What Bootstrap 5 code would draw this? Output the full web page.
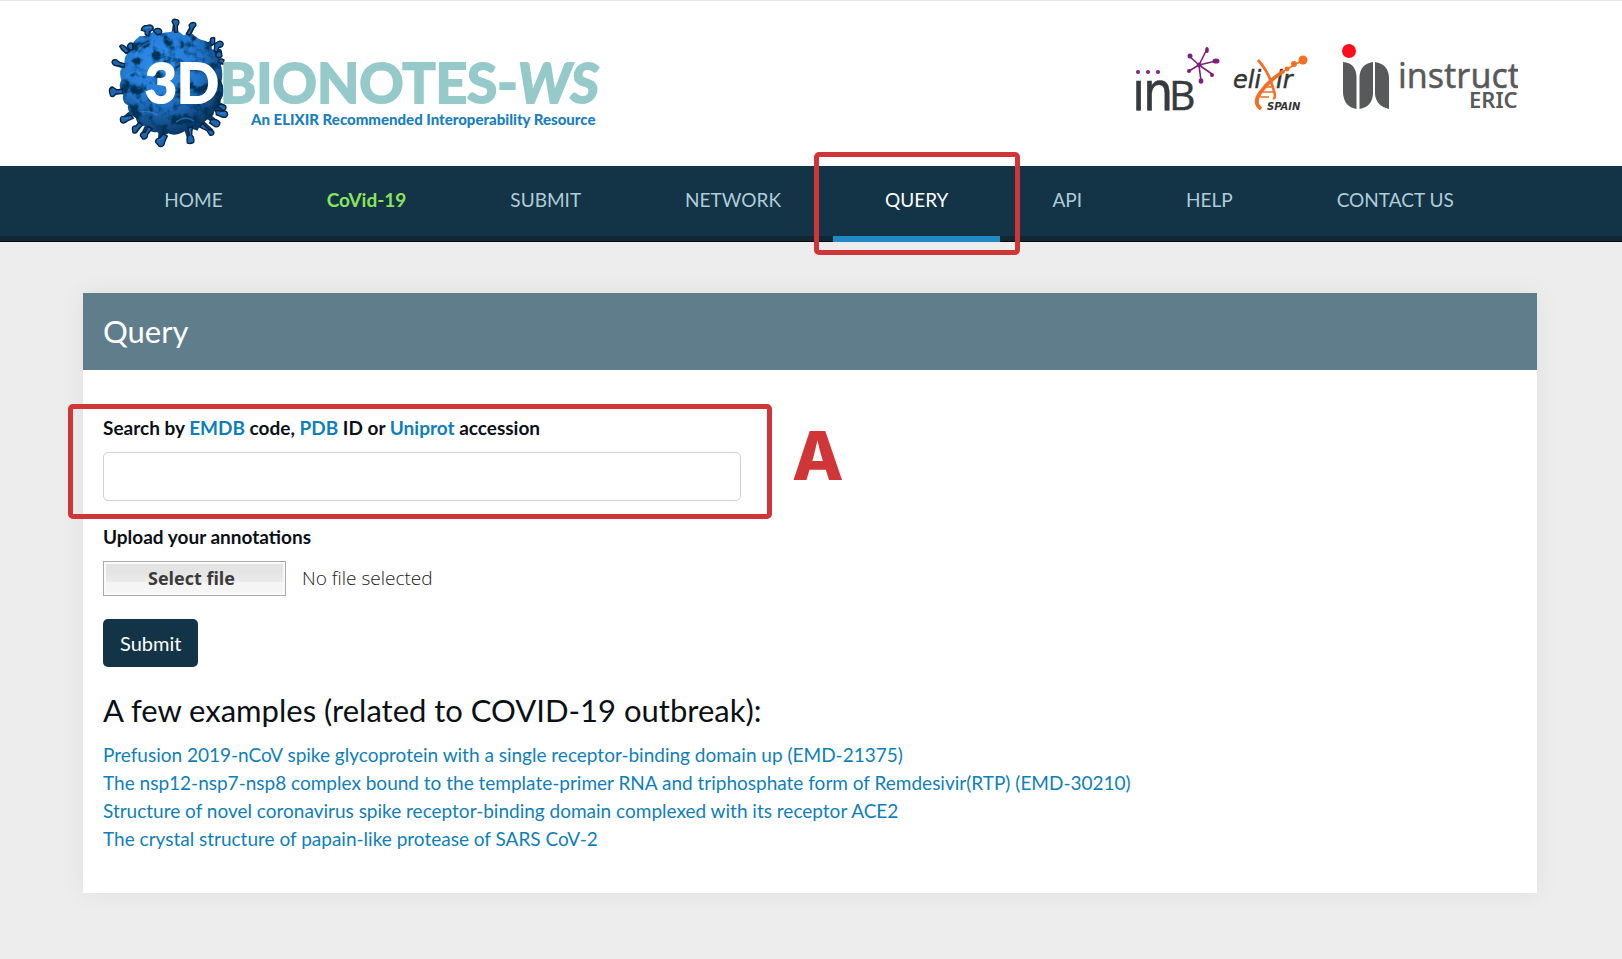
<!DOCTYPE html>
<html lang="en">
<head>
<meta charset="utf-8">
<meta name="viewport" content="width=device-width, initial-scale=1">
<title>3DBIONOTES-WS - Query</title>
<link href="https://cdn.jsdelivr.net/npm/bootstrap@5.3.0/dist/css/bootstrap.min.css" rel="stylesheet">
<style>
body { font-family: Lato, sans-serif; font-size: 19px; line-height: 28px; color: #0b1016; background: #ededed; }
a { color: #0f7fba; text-decoration: none; }
.site-header { background: #fff; border-top: 1px solid #e6e6e6; padding: 16px 104px 15px 108px; }
.site-header svg { display: block; }
.main-nav { background: #123446; height: 76px; padding-right: 4px; border-bottom: 1px solid #04090d; box-shadow: inset 0 -5px #0f2833; }
.main-nav .nav-link { color: #b0ccd8; padding: 20px 52px 22px; border-bottom: 6px solid transparent; line-height: 28px; }
.main-nav .nav-link.active { color: #fff; border-bottom-color: #2189c4; }
.main-nav .covid { color: #8be35b; font-weight: 700; }
.marker { position: absolute; border: 5px solid #d03637; border-radius: 5px; pointer-events: none; z-index: 2; }
.marker-nav { inset: -14px -20px -13px -19px; }
.marker-form { inset: -10px -31px -18px -35px; }
.marker-letter { position: absolute; left: 100%; top: 2px; margin-left: 51px; font: 800 67px/80px Inter, sans-serif; color: #d03637; }
.page-body { padding: 51px 85px 66px 83px; }
.query-panel { border: 0; border-radius: 0; box-shadow: 0 0 24px rgba(0,0,0,.06); color: inherit; }
.query-panel .card-header { background: #607d8b; color: #fff; border: 0; border-radius: 0; padding: 19px 20px; }
.query-panel h1 { font-size: 31px; line-height: 39px; font-weight: 400; }
.query-panel .card-body { padding: 44px 20px 40px; }
.search-group { max-width: 638px; margin-bottom: 22px; }
.field-label { font-weight: 700; margin-bottom: 10px; }
.search-box { height: 49px; border: 1px solid #ccd3da; border-radius: 5px; }
.file-row { margin-bottom: 23px; }
.file-btn { width: 183px; height: 35px; border: 1px solid #aaa; box-shadow: inset 0 0 0 2px #fafafa; background: linear-gradient(#e4e4e4 0 30%, #ebebeb 60%, #f5f5f5 60%); color: #3a3a3a; font: 700 18px/24px "Open Sans", sans-serif; padding: 0 6px 2px 0; }
.file-name { font: 300 19px/24px "Open Sans", sans-serif; color: #222; padding-bottom: 2px; }
.submit-btn { background: #123446; border: 0; color: #fff; font-size: 20px; line-height: 28px; padding: 10px 17px; border-radius: 5px; }
.examples-title { font-size: 31px; line-height: 38px; font-weight: 400; margin: 24px 0 12px; }
</style>
</head>
<body>
<header class="site-header d-flex justify-content-between">
  <a href="#" aria-label="3DBIONOTES-WS">
    <svg width="510" height="134" viewBox="0 0 510 134">
      <defs>
        <radialGradient id="depth" cx="38%" cy="30%" r="72%">
          <stop offset="0" stop-color="#2e90f0"/><stop offset=".55" stop-color="#2276cc"/><stop offset="1" stop-color="#0d3560"/>
        </radialGradient>
        <filter id="bumps" x="-5%" y="-5%" width="110%" height="110%">
          <feTurbulence type="fractalNoise" baseFrequency=".032" numOctaves="3" seed="5" result="n"/>
          <feColorMatrix in="n" values="0 0 0 0 0  0 0 0 0 .03  0 0 0 0 .09  4 0 0 0 -1.8" result="dark"/>
          <feComposite in="dark" in2="SourceAlpha" operator="in" result="shade"/>
          <feMerge><feMergeNode in="SourceGraphic"/><feMergeNode in="shade"/></feMerge>
        </filter>
      </defs>
      <g transform="translate(-18 -17) scale(.3333333)">
        <g stroke="#0d3a69" stroke-width="16" stroke-linecap="round">
          <path d="M235 250 172 92M235 250 204 98M235 250 257 68M250 200 307 80M250 200 366 128M235 250 388 155M235 250 100 145M235 250 120 138M235 250 78 190M235 250 70 278M235 250 102 357M235 250 136 392M235 250 160 405M225 300 210 430M260 300 301 418M260 300 362 392M235 250 378 368M270 270 405 342M235 250 398 320M235 250 392 186"/>
        </g>
        <path filter="url(#bumps)" fill="url(#depth)" d="M150 108Q165 112 182 100Q195 90 212 100L240 96Q262 86 280 106L308 102Q320 118 345 122Q364 130 366 148Q390 150 388 182Q402 215 394 245Q408 275 392 300Q392 318 372 328Q376 350 350 360Q330 376 322 392Q300 380 280 396Q255 410 235 400Q222 412 200 396Q180 400 166 378Q142 378 138 354Q110 340 114 316Q94 305 100 285Q82 262 94 240Q84 210 104 192Q100 165 122 156Q122 128 150 108Z"/>
        <g fill="#1b66b0" stroke="#08213d" stroke-width="4">
          <path d="M154 91Q155 76 172 76Q188 72 190 84Q187 94 178 94L176 108 166 104 165 94ZM190 93Q196 82 209 86Q219 92 213 101L202 105ZM246 65Q248 56 258 58Q269 59 266 71L262 78 263 96 254 97 253 77ZM297 75Q304 64 316 69Q321 77 311 83L299 106 289 101 300 85ZM361 119Q361 111 374 114 L374 130 363 138ZM374 132Q391 116 399 129Q402 140 386 143L382 157 373 153ZM378 155Q396 151 396 168Q389 178 378 169ZM89 139Q94 130 104 139L118 153 108 160 98 151ZM112 140Q115 126 128 130L128 149 120 151ZM66 187Q68 176 80 180L90 188 104 191 103 202 88 197Q70 200 66 187ZM59 278Q56 264 67 261L82 270 97 267 98 281 78 281Q70 294 62 288ZM91 356Q94 346 106 352L123 345 130 355 112 363Q100 374 92 365ZM127 387Q127 377 138 378L149 367 157 376 144 389Q138 403 129 398ZM151 407Q152 395 166 397L174 379 186 386 173 403Q173 418 159 417ZM197 427Q196 414 209 415L219 402 232 408 224 426Q222 442 208 439ZM291 419Q291 407 298 406L294 384 307 380 305 404Q314 413 311 427Q301 433 292 429ZM337 370 357 390Q366 387 372 397Q370 409 359 405L351 392 329 381ZM364 358Q386 357 390 369Q388 383 375 380L359 369ZM377 331 397 334Q412 329 413 344Q410 355 397 351L379 344ZM382 317Q395 308 407 318Q411 330 398 331ZM384 185Q391 171 402 180L399 193Z"/>
        </g>
        <g fill="none" stroke="#3a97ec" stroke-width="5" stroke-linecap="round" opacity=".5">
          <path d="M135 170Q150 130 190 125M110 230Q130 205 150 220M150 335Q180 330 200 345M260 365Q285 345 310 362M165 84 182 82M96 354 112 353M205 420 218 414M392 341 404 339"/>
        </g>
      </g>
      <g font-family="Lato, sans-serif" font-weight="900">
        <text x="37" y="86" font-size="55" font-weight="700" fill="#fff" stroke="#fff" stroke-width="2">3D</text>
        <text x="112" y="86" font-size="55" font-weight="700" fill="#96caca" stroke="#96caca" stroke-width="2">BIONOTES-<tspan font-style="italic">WS</tspan></text>
        <text x="143" y="108" font-size="15" fill="#1b7fbd">An ELIXIR Recommended Interoperability Resource</text>
      </g>
    </svg>
  </a>
  <svg width="386" height="105" viewBox="1132 17 386 105" role="img" aria-label="INB, ELIXIR Spain and Instruct ERIC">
    <!-- INB -->
    <g fill="#363a3e" stroke="#363a3e" stroke-width=".5">
      <text font-family="'DejaVu Sans Condensed', 'DejaVu Sans', sans-serif" font-size="53" y="110"><tspan x="1132">ı</tspan><tspan x="1143">n</tspan></text>
      <text font-family="'Open Sans', sans-serif" font-size="41" x="1169" y="110">B</text>
    </g>
    <g fill="#7d1f7c">
      <circle cx="1138" cy="72" r="2"/><circle cx="1148" cy="72" r="2"/><circle cx="1158" cy="72" r="2"/>
      <path stroke="#7d1f7c" stroke-width="1.6" d="M1199 65 1207 49M1199 65 1189 56M1199 65 1216 61M1199 65 1189 71M1199 65 1201 81M1199 65 1212 74"/>
      <ellipse cx="1207" cy="50" rx="1.8" ry="3"/><circle cx="1190" cy="56" r="2.5"/><ellipse cx="1216" cy="61" rx="3.5" ry="2.6"/><circle cx="1189" cy="71" r="2"/><ellipse cx="1201" cy="81" rx="2.3" ry="2.8"/><circle cx="1212" cy="75" r="2"/>
      <circle cx="1199" cy="65" r="2.4"/>
    </g>
    <!-- ELIXIR Spain -->
    <g fill="#343434" stroke="#343434" stroke-width=".5" font-family="'DejaVu Sans', sans-serif" font-style="italic">
      <text x="1233" y="88" font-size="24">eli</text>
      <text x="1276" y="88" font-size="24">ir</text>
      <text x="1267" y="110" font-size="10" font-weight="700" stroke="none">SPAIN</text>
    </g>
    <g fill="none" stroke="#f36f21">
      <path stroke-width="2.6" d="M1258 60Q1269 72 1273 88Q1277 99 1273 98"/>
      <path stroke-width="3.8" d="M1261 109Q1253 103 1260 93Q1268 81 1284 71"/>
      <path stroke-width="1.6" d="M1282 72 1303 60M1266 87H1273M1262 92H1274M1260 97H1269"/>
    </g>
    <g fill="#f36f21"><circle cx="1303" cy="60" r="4.5"/><circle cx="1294" cy="64" r="3"/><circle cx="1287" cy="69" r="2.4"/><circle cx="1282" cy="72" r="1.8"/></g>
    <!-- Instruct ERIC -->
    <circle cx="1349" cy="51" r="7" fill="#fb0d1b"/>
    <g fill="#58595b">
      <path d="M1343 62Q1356 63 1356.500 77V109Q1344 107 1343 93ZM1373 62V94Q1372 107 1359.500 109V77Q1360 64 1373 62ZM1375 62Q1388 64 1389 77V109Q1376 106 1375 94Z"/>
      <text font-family="'Noto Sans', sans-serif" font-size="34" x="1398" y="88" stroke="#58595b" stroke-width=".4">instruct</text>
      <text font-family="'Noto Sans', sans-serif" font-weight="600" font-size="22" x="1469" y="108">ERIC</text>
    </g>
  </svg>
</header>
<nav class="main-nav">
  <ul class="nav justify-content-center">
    <li class="nav-item"><a class="nav-link" href="#">HOME</a></li>
    <li class="nav-item"><a class="nav-link covid" href="#">CoVid-19</a></li>
    <li class="nav-item"><a class="nav-link" href="#">SUBMIT</a></li>
    <li class="nav-item"><a class="nav-link" href="#">NETWORK</a></li>
    <li class="nav-item position-relative"><a class="nav-link active" aria-current="page" href="#">QUERY</a><span class="marker marker-nav"></span></li>
    <li class="nav-item"><a class="nav-link" href="#">API</a></li>
    <li class="nav-item"><a class="nav-link" href="#">HELP</a></li>
    <li class="nav-item"><a class="nav-link" href="#">CONTACT US</a></li>
  </ul>
</nav>
<main class="page-body">
  <section class="card query-panel">
    <div class="card-header"><h1 class="mb-0">Query</h1></div>
    <div class="card-body">
      <form>
        <div class="search-group position-relative">
          <label class="field-label d-block" for="code">Search by <a href="#">EMDB</a> code, <a href="#">PDB</a> ID or <a href="#">Uniprot</a> accession</label>
          <input class="form-control search-box" id="code" type="text">
          <span class="marker marker-form"></span>
          <span class="marker-letter">A</span>
        </div>
        <label class="field-label d-block" for="annotations">Upload your annotations</label>
        <div class="file-row d-flex align-items-center gap-3">
          <button class="file-btn" type="button" id="annotations">Select file</button>
          <span class="file-name">No file selected</span>
        </div>
        <button class="btn submit-btn" type="button">Submit</button>
      </form>
      <h2 class="examples-title">A few examples (related to COVID-19 outbreak):</h2>
      <ul class="list-unstyled mb-0">
        <li><a href="#">Prefusion 2019-nCoV spike glycoprotein with a single receptor-binding domain up (EMD-21375)</a></li>
        <li><a href="#">The nsp12-nsp7-nsp8 complex bound to the template-primer RNA and triphosphate form of Remdesivir(RTP) (EMD-30210)</a></li>
        <li><a href="#">Structure of novel coronavirus spike receptor-binding domain complexed with its receptor ACE2</a></li>
        <li><a href="#">The crystal structure of papain-like protease of SARS CoV-2</a></li>
      </ul>
    </div>
  </section>
</main>
<script src="https://cdn.jsdelivr.net/npm/bootstrap@5.3.0/dist/js/bootstrap.bundle.min.js"></script>
</body>
</html>
